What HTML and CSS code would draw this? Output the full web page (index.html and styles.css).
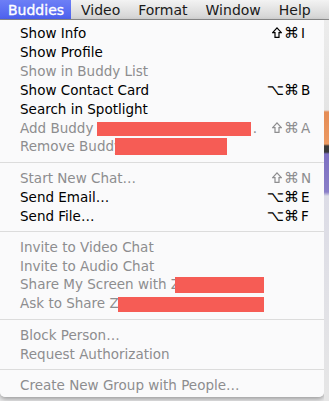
FILE: index.html
```html
<!DOCTYPE html>
<html>
<head>
<meta charset="utf-8">
<link rel="stylesheet" href="styles.css">
</head>
<body>
<div class="screen">
  <div class="menubar">
    <span class="mb-item active">Buddies</span>
    <span class="mb-item">Video</span>
    <span class="mb-item">Format</span>
    <span class="mb-item">Window</span>
    <span class="mb-item">Help</span>
  </div>
  <div class="stage">
    <div class="menu">
      <div class="row"><span class="label">Show Info</span><span class="key"><span class="mods"><svg class="shift" viewBox="0 0 10 11"><path d="M5 0.9 L9.3 5.6 H7 V10.3 H3 V5.6 H0.7 Z"/></svg>⌘</span><span class="ch">I</span></span></div>
      <div class="row"><span class="label">Show Profile</span></div>
      <div class="row off"><span class="label">Show in Buddy List</span></div>
      <div class="row"><span class="label">Show Contact Card</span><span class="key"><span class="mods">⌥⌘</span><span class="ch">B</span></span></div>
      <div class="row"><span class="label">Search in Spotlight</span></div>
      <div class="row off"><span class="label">Add Buddy <span class="redact r-add"></span>.</span><span class="key"><span class="mods"><svg class="shift" viewBox="0 0 10 11"><path d="M5 0.9 L9.3 5.6 H7 V10.3 H3 V5.6 H0.7 Z"/></svg>⌘</span><span class="ch">A</span></span></div>
      <div class="row off"><span class="label">Remove Buddy<span class="redact r-remove"></span></span></div>
      <div class="sep"></div>
      <div class="row off"><span class="label">Start New Chat…</span><span class="key"><span class="mods"><svg class="shift" viewBox="0 0 10 11"><path d="M5 0.9 L9.3 5.6 H7 V10.3 H3 V5.6 H0.7 Z"/></svg>⌘</span><span class="ch">N</span></span></div>
      <div class="row"><span class="label">Send Email…</span><span class="key"><span class="mods">⌥⌘</span><span class="ch">E</span></span></div>
      <div class="row"><span class="label">Send File…</span><span class="key"><span class="mods">⌥⌘</span><span class="ch">F</span></span></div>
      <div class="sep"></div>
      <div class="row off"><span class="label">Invite to Video Chat</span></div>
      <div class="row off"><span class="label">Invite to Audio Chat</span></div>
      <div class="row off"><span class="label">Share My Screen with Z<span class="redact r-share"></span></span></div>
      <div class="row off"><span class="label">Ask to Share Z<span class="redact r-ask"></span></span></div>
      <div class="sep"></div>
      <div class="row off"><span class="label">Block Person…</span></div>
      <div class="row off"><span class="label">Request Authorization</span></div>
      <div class="sep"></div>
      <div class="row off"><span class="label">Create New Group with People…</span></div>
    </div>
    <div class="edge"></div>
  </div>
</div>
</body>
</html>
```
FILE: styles.css
```css
* { box-sizing: border-box; }
html, body { margin: 0; padding: 0; }
body {
  width: 329px;
  height: 401px;
  overflow: hidden;
  background: #e9e9ea;
  font-family: "DejaVu Sans", "Lucida Grande", sans-serif;
}
.screen { display: flex; flex-direction: column; height: 401px; }
.menubar {
  height: 20px;
  display: flex;
  align-items: stretch;
  background: linear-gradient(#f3f3f3, #d3d3d3);
  border-bottom: 1px solid #8c8c8c;
  font-size: 14px;
  color: #1a1a1a;
}
.mb-item {
  display: flex;
  align-items: center;
  padding: 0 9px;
}
.mb-item:nth-child(2) { padding-left: 10px; }
.mb-item.active {
  background: linear-gradient(#6d7ff6, #4d62ee);
  color: #fff;
  -webkit-text-stroke: 0.35px #fff;
  padding: 0 0 0 8px;
  width: 71px;
}
.stage { flex: 1; display: flex; align-items: flex-start; }
.menu {
  width: 324px;
  background: rgba(250, 250, 251, 0.97);
  border-radius: 0 0 5px 5px;
  box-shadow: 0 2px 5px rgba(0,0,0,0.35);
  padding: 3px 0 3px;
  font-size: 13.5px;
  color: #000;
}
.row {
  height: 19px;
  display: flex;
  align-items: center;
  justify-content: space-between;
  padding: 0 11px 0 20px;
  white-space: nowrap;
}
.row.off { color: #8d8d8f; }
.key { display: flex; align-items: center; }
.mods { display: flex; align-items: center; gap: 2px; font-size: 15px; }
.ch { width: 12px; margin-left: 2px; }
.shift {
  width: 10px;
  height: 11px;
  fill: none;
  stroke: currentColor;
  stroke-width: 1.2;
  stroke-linejoin: miter;
}
.sep {
  height: 12px;
  display: flex;
  align-items: center;
}
.sep::before {
  content: "";
  flex: 1;
  height: 1px;
  background: #dcdcdc;
}
.redact {
  display: inline-block;
  background: #f65c55;
  vertical-align: middle;
}
.r-add { width: 154px; height: 14px; margin-left: -1px; margin-right: 2px; }
.r-remove { width: 112px; height: 17px; margin-left: -7px; }
.r-share { width: 89px; height: 16px; margin-left: -5px; }
.r-ask { width: 146px; height: 15px; margin-left: -1px; }
.edge {
  flex: 1;
  align-self: stretch;
  background: linear-gradient(#ececec 0, #e4e4e4 90px, #e58c55 92px, #ec9a63 124px, #3a3a3a 126px, #3a3a3a 132px, #7d70c2 134px, #8a7fc8 172px, #dcdce6 176px, #e6e6e6 100%);
}
```
